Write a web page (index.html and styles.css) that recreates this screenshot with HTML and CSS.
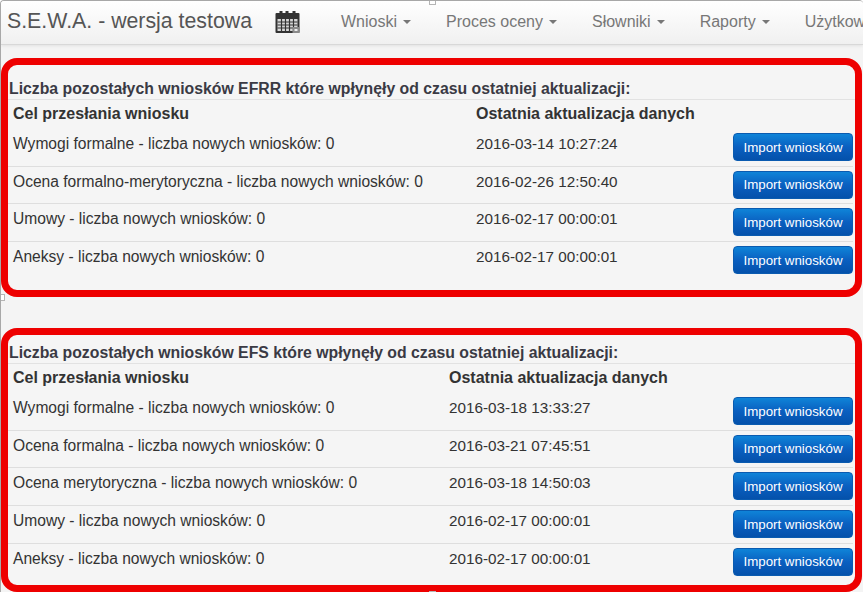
FILE: index.html
```html
<!DOCTYPE html>
<html lang="pl">
<head>
    <meta charset="UTF-8">
    <meta name="viewport" content="width=device-width, initial-scale=1.0">
    <title>S.E.W.A. - wersja testowa</title>
    <link rel="stylesheet" href="styles.css">
</head>
<body>
    <div class="page">
        <nav class="navbar">
            <a class="brand">S.E.W.A. - wersja testowa</a>
            <svg class="calendar" viewBox="0 0 24 24" width="25" height="24">
                <rect x="0" y="3" width="24" height="20" rx="1" fill="#333"/>
                <rect x="4" y="1" width="3" height="4" fill="#333"/>
                <rect x="10" y="1" width="3" height="4" fill="#333"/>
                <rect x="17" y="1" width="3" height="4" fill="#333"/>
                <rect x="2" y="9" width="20" height="12" fill="#d8d8d8"/>
                <path d="M2 12h20M2 15h20M2 18h20M6 9v12M10 9v12M14 9v12M18 9v12" stroke="#333" stroke-width="1.2"/>
                <rect x="17" y="17" width="7" height="6" fill="#8a8a8a"/>
                <rect x="19" y="19" width="3" height="2" fill="#eee"/>
            </svg>
            <ul class="menu">
                <li>Wnioski<span class="caret"></span></li>
                <li>Proces oceny<span class="caret"></span></li>
                <li>Słowniki<span class="caret"></span></li>
                <li>Raporty<span class="caret"></span></li>
                <li>Użytkownicy<span class="caret"></span></li>
            </ul>
        </nav>

        <section class="panel panel-efrr">
            <h4 class="panel-title">Liczba pozostałych wniosków EFRR które wpłynęły od czasu ostatniej aktualizacji:</h4>
            <div class="row row-head">
                <div>Cel przesłania wniosku</div>
                <div>Ostatnia aktualizacja danych</div>
            </div>
            <div class="row">
                <div>Wymogi formalne - liczba nowych wniosków: 0</div>
                <div class="date">2016-03-14 10:27:24</div>
                <button class="button">Import wniosków</button>
            </div>
            <div class="row">
                <div>Ocena formalno-merytoryczna - liczba nowych wniosków: 0</div>
                <div class="date">2016-02-26 12:50:40</div>
                <button class="button">Import wniosków</button>
            </div>
            <div class="row">
                <div>Umowy - liczba nowych wniosków: 0</div>
                <div class="date">2016-02-17 00:00:01</div>
                <button class="button">Import wniosków</button>
            </div>
            <div class="row">
                <div>Aneksy - liczba nowych wniosków: 0</div>
                <div class="date">2016-02-17 00:00:01</div>
                <button class="button">Import wniosków</button>
            </div>
        </section>

        <section class="panel panel-efs">
            <h4 class="panel-title">Liczba pozostałych wniosków EFS które wpłynęły od czasu ostatniej aktualizacji:</h4>
            <div class="row row-head">
                <div>Cel przesłania wniosku</div>
                <div>Ostatnia aktualizacja danych</div>
            </div>
            <div class="row">
                <div>Wymogi formalne - liczba nowych wniosków: 0</div>
                <div class="date">2016-03-18 13:33:27</div>
                <button class="button">Import wniosków</button>
            </div>
            <div class="row">
                <div>Ocena formalna - liczba nowych wniosków: 0</div>
                <div class="date">2016-03-21 07:45:51</div>
                <button class="button">Import wniosków</button>
            </div>
            <div class="row">
                <div>Ocena merytoryczna - liczba nowych wniosków: 0</div>
                <div class="date">2016-03-18 14:50:03</div>
                <button class="button">Import wniosków</button>
            </div>
            <div class="row">
                <div>Umowy - liczba nowych wniosków: 0</div>
                <div class="date">2016-02-17 00:00:01</div>
                <button class="button">Import wniosków</button>
            </div>
            <div class="row">
                <div>Aneksy - liczba nowych wniosków: 0</div>
                <div class="date">2016-02-17 00:00:01</div>
                <button class="button">Import wniosków</button>
            </div>
        </section>

        <span class="handle handle-top"></span>
        <span class="handle handle-left"></span>
        <span class="handle handle-bottom"></span>
    </div>
</body>
</html>
```

FILE: styles.css
```css
html, body {
    margin: 0;
    height: 100%;
    overflow: hidden;
}

body {
    font-family: "Liberation Sans", Arial, sans-serif;
    font-size: 16px;
    color: #333;
    background: #fff;
}

.page {
    position: relative;
    box-sizing: border-box;
    width: 863px;
    height: 592px;
    overflow: hidden;
    background: #f4f4f4;
    border-top: 1px solid #a8a8a8;
    border-left: 1px solid #a8a8a8;
    border-top-left-radius: 4px;
    border-top-right-radius: 4px;
}

.navbar {
    display: flex;
    align-items: center;
    height: 44px;
    padding-bottom: 2px;
    box-sizing: border-box;
    white-space: nowrap;
    background: linear-gradient(to bottom, #fff 0%, #f0f0f0 100%);
    border-bottom: 1px solid #d8d8d8;
    box-shadow: 0 1px 3px rgba(0, 0, 0, 0.08);
}

.brand {
    margin-left: 6px;
    font-size: 21.3px;
    color: #555;
}

.calendar {
    margin-left: 23px;
    flex: none;
}

.menu {
    display: flex;
    margin: 0 0 0 41px;
    padding: 0;
    list-style: none;
    color: #777;
}

.menu li {
    margin-right: 35px;
}

.caret {
    display: inline-block;
    margin-left: 6px;
    vertical-align: middle;
    border-top: 4px solid #777;
    border-left: 4px solid transparent;
    border-right: 4px solid transparent;
}

.panel {
    box-sizing: border-box;
    width: 861px;
    border: 7px solid #ee0000;
    border-radius: 16px;
    background: #f5f5f5;
}

.panel-efrr {
    height: 239px;
    margin-top: 13px;
    padding-top: 15px;
}

.panel-efs {
    height: 264px;
    margin-top: 31px;
    padding-top: 9px;
}

.panel-title {
    margin: 0;
    padding: 0 0 1px 1px;
    font-size: 15.8px;
    line-height: 18px;
    font-weight: bold;
    color: #3a3a44;
    border-bottom: 1px solid #e2e2e2;
}

.row {
    display: grid;
    grid-template-columns: 463px 1fr 120px;
    align-items: start;
    height: 37.7px;
    margin-right: 2px;
    padding-left: 5px;
    box-sizing: border-box;
    font-size: 15.6px;
    line-height: 22px;
    border-bottom: 1px solid #dedede;
}

.panel-efs .row {
    grid-template-columns: 436px 1fr 120px;
}

.row > div {
    padding-top: 4px;
}

.row:last-child {
    border-bottom: none;
}

.row-head {
    height: 29px;
    font-size: 16px;
    font-weight: bold;
    border-bottom: none;
}

.row-head > div {
    padding-top: 3px;
}

.date {
    font-size: 15.25px;
}

.button {
    height: 28px;
    margin-top: 4px;
    padding: 0;
    font-family: inherit;
    font-size: 13.3px;
    color: #fff;
    background: linear-gradient(to bottom, #0f84d8 0%, #0a5fc0 50%, #0451ab 100%);
    border: 1px solid #0a5bb0;
    border-radius: 4px;
    cursor: pointer;
}

.handle {
    position: absolute;
    width: 5px;
    height: 5px;
    background: #fff;
    border: 1px solid #b5b5b5;
}

.handle-top {
    top: -3px;
    left: 428px;
}

.handle-left {
    top: 293px;
    left: -3px;
}

.handle-bottom {
    bottom: -6px;
    left: 428px;
}
```
